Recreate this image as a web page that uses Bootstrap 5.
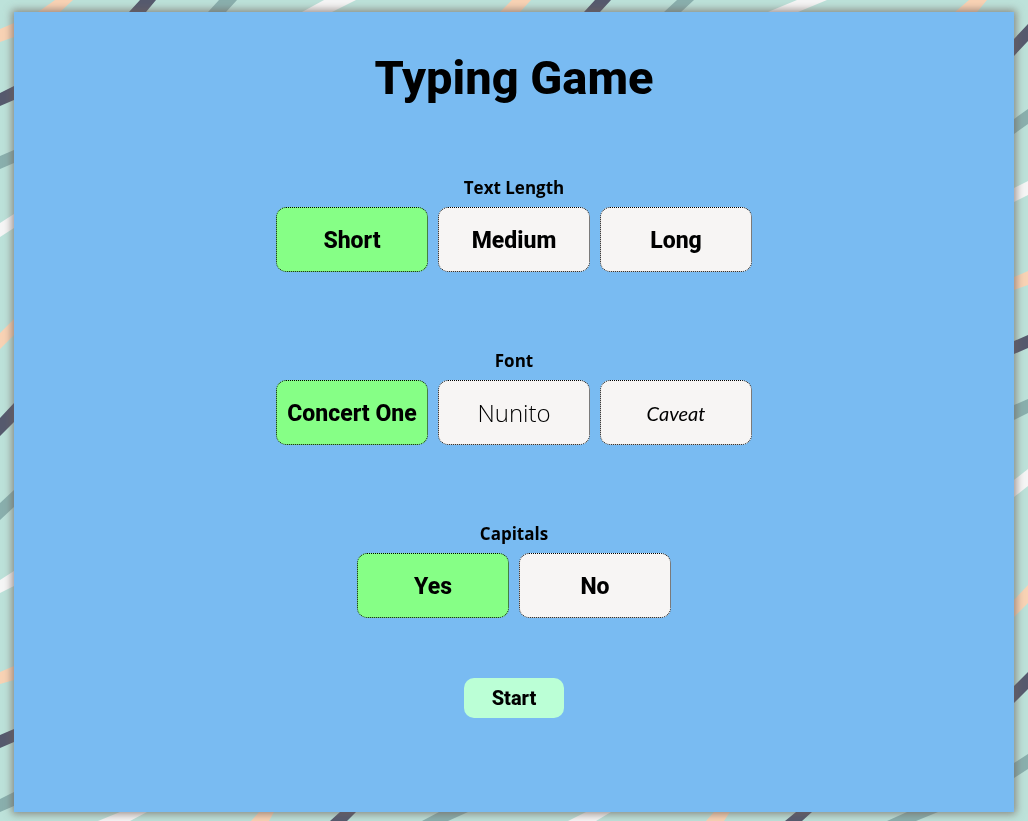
<!DOCTYPE html>
<html lang="en">
<head>
<meta charset="utf-8">
<meta name="viewport" content="width=device-width, initial-scale=1">
<title>Typing Game</title>
<link href="https://cdn.jsdelivr.net/npm/bootstrap@5.3.0/dist/css/bootstrap.min.css" rel="stylesheet">
<style>
  body { background: #bde2da; color: #000; font-family: Roboto, sans-serif; }
  .backdrop { position: fixed; inset: 0; width: 100%; height: 100%; z-index: -1; }
  .game-page { min-height: 100vh; padding: 12px 14px 9px; }
  .game-panel { background: #79bbf2; box-shadow: 0 0 8px 2px rgba(110, 95, 90, .7); padding: 36px 16px 60px; }
  .game-title { font-size: 47px; line-height: 60px; font-weight: 800; margin-bottom: 68px; }
  .option-groups { gap: 77px; }
  .option-title { font: 700 17px/24px "Open Sans", "Noto Sans", sans-serif; margin-bottom: 7px; }
  .option-row { gap: 10px; }
  .option { width: 152px; height: 65px; padding-top: 4px; background: #f7f5f4; border: 1px dotted #000; border-radius: 10px; font-size: 23px; font-weight: 800; cursor: pointer; }
  .btn-check:checked + .option { background: #86ff86; }
  .btn-check:focus-visible + .option { outline: 2px solid #000; }
  .face-light { padding-top: 0; font-family: "Open Sans", sans-serif; font-size: 24px; font-weight: 300; }
  .face-script { padding-top: 0; font-family: Lato, sans-serif; font-size: 20px; font-style: italic; font-weight: 400; }
  .start { width: 100px; height: 40px; margin-top: 60px; background: #bbffd6; border: 0; border-radius: 10px; font-size: 20px; font-weight: 800; color: #000; }
</style>
</head>
<body>
<svg class="backdrop" viewBox="0 0 1028 821" preserveAspectRatio="none" aria-hidden="true">
  <path fill="#f9d3b5" d="M55 0H73L60 12H38zM512 0H531L520 12H500zM969 0H987L977 12H955zM0 29L14 23V37L0 42zM0 333L14 319V335L0 349zM0 672L14 666V680L0 684zM1014 277L1028 271V285L1014 290zM1014 600L1028 585V603L1014 617zM259 812H274L269 821H251zM714 812H730L724 821H706z"/>
  <path fill="#565a6e" d="M140 0H156L146 12H129zM595 0H611L600 12H584zM0 93L14 86V100L0 106zM0 418L14 403V422L0 436zM0 735L14 729V742L0 748zM1014 39L1028 24V41L1014 56zM1014 341L1028 335V348L1014 354zM1014 686L1028 672V689L1014 703zM340 812H356L347 821H330zM796 812H812L802 821H785z"/>
  <path fill="#8ab0ae" d="M219 0H237L226 12H208zM677 0H694L681 12H664zM0 156L14 150V163L0 169zM0 503L14 490V507L0 520zM0 799L14 792V806L0 812zM1014 119L1028 109V124L1014 134zM1014 405L1028 399V413L1014 420zM1014 763L1028 754V769L1014 778zM439 812H468L448 821H422zM907 812H938L916 821H887z"/>
  <path fill="#f6f6f6" d="M324 0H356L332 12H302zM797 0H827L798 12H768zM0 223L14 214V228L0 237zM0 580L14 571V586L0 593zM1014 188L1028 181V195L1014 202zM1014 480L1028 469V486L1014 497zM120 812H147L130 821H98zM586 812H611L596 821H568z"/>
</svg>
<div class="game-page d-flex">
  <main class="game-panel flex-fill d-flex flex-column align-items-center">
    <h1 class="game-title text-center">Typing Game</h1>
    <form class="d-flex flex-column align-items-center">
      <div class="option-groups d-flex flex-column">
        <fieldset>
          <legend class="option-title float-none text-center">Text Length</legend>
          <div class="option-row d-flex flex-wrap justify-content-center">
            <input class="btn-check" type="radio" name="length" id="short" checked>
            <label class="option d-flex align-items-center justify-content-center" for="short">Short</label>
            <input class="btn-check" type="radio" name="length" id="medium">
            <label class="option d-flex align-items-center justify-content-center" for="medium">Medium</label>
            <input class="btn-check" type="radio" name="length" id="long">
            <label class="option d-flex align-items-center justify-content-center" for="long">Long</label>
          </div>
        </fieldset>
        <fieldset>
          <legend class="option-title float-none text-center">Font</legend>
          <div class="option-row d-flex flex-wrap justify-content-center">
            <input class="btn-check" type="radio" name="font" id="concert" checked>
            <label class="option d-flex align-items-center justify-content-center" for="concert">Concert One</label>
            <input class="btn-check" type="radio" name="font" id="nunito">
            <label class="option face-light d-flex align-items-center justify-content-center" for="nunito">Nunito</label>
            <input class="btn-check" type="radio" name="font" id="caveat">
            <label class="option face-script d-flex align-items-center justify-content-center" for="caveat">Caveat</label>
          </div>
        </fieldset>
        <fieldset>
          <legend class="option-title float-none text-center">Capitals</legend>
          <div class="option-row d-flex flex-wrap justify-content-center">
            <input class="btn-check" type="radio" name="capitals" id="yes" checked>
            <label class="option d-flex align-items-center justify-content-center" for="yes">Yes</label>
            <input class="btn-check" type="radio" name="capitals" id="no">
            <label class="option d-flex align-items-center justify-content-center" for="no">No</label>
          </div>
        </fieldset>
      </div>
      <button class="start" type="button">Start</button>
    </form>
  </main>
</div>
<script src="https://cdn.jsdelivr.net/npm/bootstrap@5.3.0/dist/js/bootstrap.bundle.min.js"></script>
</body>
</html>
